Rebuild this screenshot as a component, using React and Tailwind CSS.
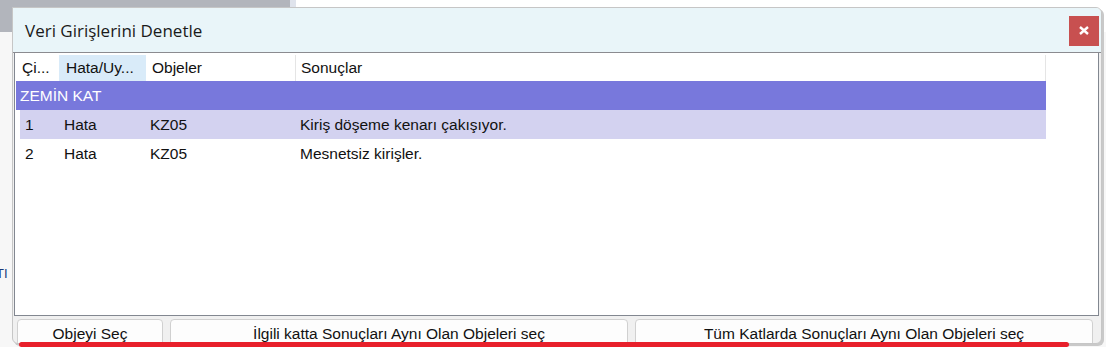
import React from 'react';

const cols = [
  { key: 'no', label: 'Çi...', w: 'w-[44px]', pad: 'pl-[7px]' },
  { key: 'type', label: 'Hata/Uy...', w: 'w-[87px]', pad: 'pl-[7px]', active: true },
  { key: 'obj', label: 'Objeler', w: 'w-[149px]', pad: 'pl-[6px]' },
  { key: 'res', label: 'Sonuçlar', w: 'w-[751px]', pad: 'pl-[5px]', sep: true },
];

const rows = [
  { no: '1', type: 'Hata', obj: 'KZ05', res: 'Kiriş döşeme kenarı çakışıyor.', selected: true },
  { no: '2', type: 'Hata', obj: 'KZ05', res: 'Mesnetsiz kirişler.' },
];

const Row = ({ row }) => (
  <div
    className={`ml-[5px] w-[1026px] h-[29px] flex items-center ${
      row.selected ? 'bg-[#d3d2f0]' : 'bg-white'
    }`}
  >
    <div className="w-[39px] pl-[5px]">{row.no}</div>
    <div className="w-[86px] pl-[5px]">{row.type}</div>
    <div className="w-[150px] pl-[5px]">{row.obj}</div>
    <div className="flex-1 pl-[5px]">{row.res}</div>
  </div>
);

const App = () => {
  return (
    <div className="relative w-[1106px] h-[347px] overflow-hidden bg-[#f7f7f7] font-['Liberation_Sans',Arial,sans-serif] text-[15.5px] text-[#111]">
      {/* whatever sits behind the dialog */}
      <div className="flex h-[32px]">
        <div className="w-[290px] bg-[#b2b5bc]" />
        <div className="w-[6px] bg-[#dfe3ec]" />
        <div className="flex-1 bg-white" />
      </div>
      <div className="absolute left-[-4px] top-[264px] text-[13px] text-[#1b3a7a]">TI</div>

      {/* dialog */}
      <div className="absolute left-[12px] top-[7px] w-[1090px] h-[337px] flex flex-col bg-[#f0f0f0] border border-[#c6c6c6] rounded-tr-[6px] rounded-b-[6px] shadow-[2px_2px_0_#c9c9c9] overflow-hidden">
        <div className="h-[45px] shrink-0 flex items-center justify-between bg-[#e9f5f9] border-b border-[#8b8b90]">
          <span className="pl-[12px] pt-[1px] text-[17px] text-[#1a1a1a] font-['Open_Sans','Noto_Sans',sans-serif]">
            Veri Girişlerini Denetle
          </span>
          <button className="mr-[2px] mt-[1px] w-[30px] h-[30px] flex items-center justify-center bg-[#c85050]">
            <svg width="10" height="9" viewBox="0 0 10 9">
              <path d="M1 1 L9 8 M9 1 L1 8" stroke="white" strokeWidth="2.4" />
            </svg>
          </button>
        </div>

        <div className="ml-[1px] w-[1085px] h-[263px] shrink-0 bg-white border-x border-b border-[#828790] pt-[2px]">
          <div className="h-[26px] flex items-stretch">
            {cols.map((c) => (
              <div
                key={c.key}
                className={`${c.w} ${c.pad} flex items-center ${c.active ? 'bg-[#d9ebf9]' : ''} ${
                  c.sep ? 'border-x border-[#e5e5e5]' : ''
                }`}
              >
                {c.label}
              </div>
            ))}
          </div>
          <div className="ml-[1px] w-[1030px] h-[29px] flex items-center pl-[4px] bg-[#7878dc] text-white">
            ZEMİN KAT
          </div>
          {rows.map((r) => (
            <Row key={r.no} row={r} />
          ))}
        </div>

        <div className="flex gap-[7px] pl-[4px] pt-[3px]">
          <button className="w-[146px] h-[32px] pb-[2px] bg-[#fdfdfd] border border-[#d0d0d0] rounded-[4px]">Objeyi Seç</button>
          <button className="w-[458px] h-[32px] pb-[2px] bg-[#fdfdfd] border border-[#d0d0d0] rounded-[4px]">
            İlgili katta Sonuçları Aynı Olan Objeleri seç
          </button>
          <button className="w-[458px] h-[32px] pb-[2px] bg-[#fdfdfd] border border-[#d0d0d0] rounded-[4px]">
            Tüm Katlarda Sonuçları Aynı Olan Objeleri seç
          </button>
        </div>
      </div>

      {/* red marker stroke over the buttons */}
      <div className="absolute left-[19px] top-[342px] w-[1050px] h-[5px] rounded-full bg-[#e8202b]" />
    </div>
  );
};

export default App;
